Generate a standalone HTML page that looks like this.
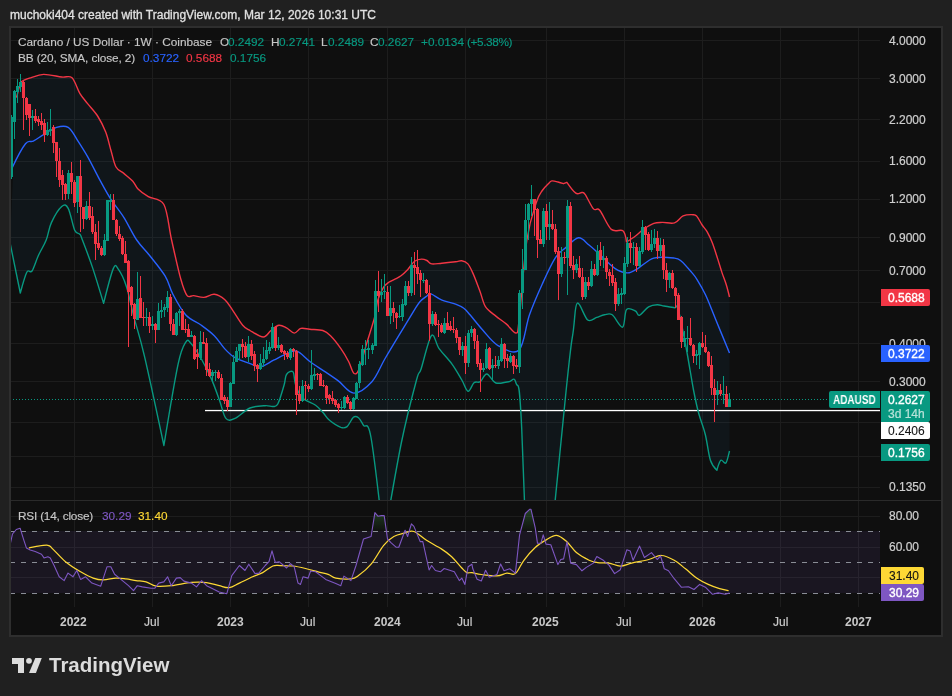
<!DOCTYPE html>
<html><head><meta charset="utf-8">
<style>
.t,.pl span{will-change:transform;}
html,body{margin:0;padding:0;width:952px;height:696px;overflow:hidden;background:#202020;font-family:"Liberation Sans",sans-serif;}
.t{position:absolute;white-space:pre;line-height:12px;font-size:12px;}
.pl{position:absolute;left:881px;width:49px;height:17px;border-radius:0 2px 2px 0;}
.pl span{position:absolute;right:5px;top:3px;font-size:12px;line-height:12px;font-weight:400;-webkit-text-stroke:0.35px currentColor;color:#fff;}
.ax{color:#cfcfcf;-webkit-text-stroke:0.2px #cfcfcf;}
.yr{font-weight:700;color:#c8c8c8;}
.mo{color:#c8c8c8;-webkit-text-stroke:0.2px #c8c8c8;}
.lg{font-size:11.8px;color:#c8c8c8;-webkit-text-stroke:0.15px currentColor;}
.tl{color:#089981;}
</style></head><body>
<div class="t" style="left:10px;top:9px;color:#e0e0e0;-webkit-text-stroke:0.3px #e0e0e0">muchoki404 created with TradingView.com, Mar 12, 2026 10:31 UTC</div>
<div style="position:absolute;left:9px;top:26px;width:930px;height:607px;border:2px solid #2e2e2e;background:#0f0f0f"></div>


<svg style="position:absolute;left:0;top:0" width="952" height="696" viewBox="0 0 952 696">
  <defs>
    <clipPath id="cp"><rect x="11" y="28" width="869" height="472"/></clipPath>
    <clipPath id="cr"><rect x="11" y="501" width="869" height="106"/></clipPath>
    <clipPath id="ob"><rect x="11" y="501" width="869" height="30.5"/></clipPath>
    <linearGradient id="obg" gradientUnits="userSpaceOnUse" x1="0" y1="509" x2="0" y2="531"><stop offset="0" stop-color="#4caf50" stop-opacity="0.32"/><stop offset="1" stop-color="#4caf50" stop-opacity="0.02"/></linearGradient>
  </defs>
  <g stroke="#1d1d1d" stroke-width="1" fill="none">
    <path d="M11 40.5H880M11 78.5H880M11 119.5H880M11 161.5H880M11 199.5H880M11 237.5H880M11 270.5H880M11 302.5H880M11 343.5H880M11 381.5H880M11 422.5H880M11 456.5H880M11 487.5H880"/>
    <path d="M74.5 28V607M152.5 28V607M230.5 28V607M308.5 28V607M387.5 28V607M465.5 28V607M546.5 28V607M624.5 28V607M702.5 28V607M780.5 28V607M858.5 28V607"/>
    <path d="M11 516.5H880M11 547.5H880M11 577.5H880"/>
  </g>
  <path d="M11 500.5H941" stroke="#2a2a2a" stroke-width="1"/>
  <g clip-path="url(#cp)">
    <path d="M16.5 97.6C17.0 95.8 18.4 89.7 19.3 87.0C20.2 84.3 19.7 83.1 21.6 81.6C23.5 80.1 27.0 79.0 30.7 77.8C34.4 76.6 38.4 74.5 43.6 74.4C48.8 74.3 57.0 76.4 61.7 77.0C66.4 77.6 69.0 75.1 72.0 77.8C75.0 80.5 77.2 89.0 79.8 93.3C82.4 97.6 84.6 99.7 87.6 103.6C90.6 107.5 94.9 111.8 97.9 116.5C100.9 121.2 103.5 126.4 105.7 132.0C107.9 137.6 109.2 144.4 110.9 150.2C112.6 156.0 113.8 163.1 116.0 167.0C118.2 170.9 121.0 171.0 123.8 173.4C126.6 175.8 130.4 178.6 132.8 181.2C135.2 183.8 135.4 186.4 138.0 189.0C140.6 191.6 144.0 194.1 148.3 196.7C152.6 199.3 160.0 197.3 163.9 204.5C167.8 211.7 168.8 227.6 171.6 240.0C174.4 252.4 178.1 269.5 180.7 278.8C183.3 288.1 184.9 292.8 187.1 295.6C189.2 298.4 190.8 295.3 193.6 295.6C196.4 295.9 200.4 297.6 203.9 297.4C207.4 297.2 210.9 293.9 214.3 294.3C217.8 294.7 221.6 296.9 224.6 299.5C227.6 302.1 229.4 305.5 232.4 309.8C235.4 314.1 239.8 321.9 242.7 325.3C245.6 328.8 246.6 328.6 250.0 330.5C253.4 332.4 259.8 337.0 263.3 337.0C266.8 337.0 268.4 332.4 271.0 330.5C273.6 328.6 276.2 325.7 278.8 325.3C281.4 324.9 283.9 326.6 286.5 327.9C289.1 329.2 291.9 333.0 294.3 333.1C296.7 333.2 298.2 329.0 300.8 328.4C303.4 327.8 306.1 328.8 309.8 329.2C313.5 329.6 319.4 329.4 322.8 330.5C326.2 331.6 327.5 332.7 330.5 335.7C333.5 338.7 337.9 344.3 340.9 348.6C343.9 352.9 346.5 357.4 348.6 361.5C350.8 365.6 352.1 371.9 353.8 373.2C355.5 374.5 356.9 374.3 359.0 369.3C361.1 364.3 364.1 352.0 366.7 343.4C369.3 334.8 372.6 324.8 374.5 317.6C376.4 310.4 376.4 305.1 377.8 300.1C379.2 295.1 381.4 290.8 383.2 287.8C385.0 284.8 386.6 283.8 388.7 282.3C390.8 280.8 393.4 280.0 395.5 278.9C397.6 277.8 398.9 277.4 401.0 275.8C403.1 274.2 405.5 271.8 407.8 269.4C410.1 267.0 412.3 262.9 414.6 261.2C416.9 259.5 419.4 259.2 421.5 259.1C423.6 259.0 425.2 259.7 426.9 260.5C428.6 261.3 429.2 263.4 431.7 263.9C434.2 264.3 437.9 263.5 441.9 263.2C445.9 262.9 452.3 262.2 455.6 261.8C458.9 261.4 459.6 260.5 461.7 260.8C463.8 261.1 466.0 261.7 467.9 263.9C469.8 266.1 471.2 269.4 473.3 274.1C475.4 278.8 478.1 286.4 480.2 291.9C482.2 297.4 483.0 302.9 485.6 306.9C488.2 310.9 492.5 313.3 495.9 316.1C499.3 318.9 502.8 321.1 506.2 323.9C509.6 326.7 513.9 333.6 516.0 333.0C518.1 332.4 517.3 335.5 519.1 320.0C520.9 304.5 524.0 259.5 526.9 239.8C529.8 220.1 533.9 210.2 536.5 202.0C539.1 193.8 540.2 193.7 542.3 190.5C544.4 187.3 547.5 184.6 549.1 183.0C550.7 181.4 550.4 181.1 551.9 180.9C553.4 180.7 556.1 181.5 558.0 182.0C559.9 182.5 563.5 183.7 563.5 183.7C563.5 183.7 566.9 182.3 566.9 182.3C566.9 182.3 573.3 191.5 575.8 193.2C578.3 194.9 580.3 192.3 581.9 192.5C583.5 192.7 583.4 191.9 585.3 194.6C587.2 197.3 591.1 206.3 593.5 208.9C595.9 211.5 596.7 206.9 599.7 210.3C602.7 213.7 607.4 226.0 611.3 229.4C615.2 232.8 620.4 228.7 622.9 230.8C625.4 232.9 626.5 242.0 626.5 242.0C626.5 242.0 632.7 238.1 635.5 236.0C638.3 233.9 640.4 231.4 643.4 229.3C646.4 227.2 650.6 224.5 653.8 223.3C657.0 222.2 658.9 222.5 662.4 222.4C665.9 222.3 671.0 224.0 674.5 222.9C678.0 221.8 680.0 217.3 683.1 215.9C686.2 214.5 691.1 214.6 693.4 214.7C695.7 214.8 695.4 214.7 696.9 216.4C698.4 218.1 700.4 222.4 702.1 225.0C703.8 227.6 705.5 228.9 707.2 231.9C708.9 234.9 710.7 238.6 712.4 243.1C714.1 247.6 716.0 253.7 717.6 258.6C719.2 263.5 720.5 268.1 721.9 272.4C723.3 276.7 724.9 280.4 726.2 284.5C727.5 288.6 729.0 294.9 729.5 297.0L729.5 451.0C728.9 453.0 727.4 461.3 725.9 462.9C724.4 464.4 722.3 459.1 720.8 460.3C719.3 461.5 716.9 470.2 716.9 470.2C716.9 470.2 712.3 466.2 710.4 460.3C708.5 454.4 707.2 442.2 705.3 434.5C703.4 426.8 700.8 421.1 698.8 413.8C696.8 406.5 695.8 401.7 693.6 390.5C691.5 379.3 688.5 360.1 685.9 346.5C683.3 332.9 680.0 315.4 678.1 309.0C676.2 302.6 676.8 308.3 674.5 307.8C672.2 307.3 667.0 306.5 664.1 306.0C661.2 305.5 659.8 304.6 657.2 304.7C654.6 304.8 651.6 305.1 648.6 306.9C645.6 308.7 641.6 314.6 639.4 315.3C637.2 316.0 637.6 311.9 635.5 311.0C633.4 310.1 628.6 306.9 626.5 309.6C624.4 312.3 625.0 326.3 622.6 327.2C620.2 328.1 615.2 316.9 612.2 314.8C609.2 312.7 607.1 314.4 604.5 314.8C601.9 315.2 599.5 316.5 596.7 317.4C593.9 318.3 590.9 322.4 587.7 320.0C584.5 317.6 579.7 301.5 577.3 303.2C574.9 304.9 575.3 314.8 573.4 330.0C571.5 345.2 572.5 328.2 565.7 394.7C558.9 461.2 532.6 729.0 532.6 729.0C532.6 729.0 524.5 486.0 521.7 428.3C518.9 370.6 518.1 390.8 516.0 383.0C513.9 375.2 512.1 381.7 508.8 381.7C505.4 381.7 499.6 384.3 495.9 383.0C492.2 381.7 489.4 374.2 486.8 374.0C484.2 373.8 482.4 380.2 480.3 381.7C478.2 383.1 476.0 381.1 474.0 382.7C472.0 384.3 470.1 391.8 468.1 391.3C466.1 390.9 464.5 384.5 461.8 380.0C459.1 375.5 455.8 369.3 452.0 364.1C448.2 358.9 442.5 353.3 439.1 348.6C435.7 343.9 434.4 332.2 431.4 335.7C428.4 339.1 423.5 361.9 421.0 369.3C418.5 376.7 419.8 367.7 416.5 380.0C413.2 392.3 406.8 416.2 401.3 443.0C395.9 469.8 383.8 541.0 383.8 541.0C383.8 541.0 374.5 457.3 371.1 438.0C367.7 418.7 365.6 428.8 363.5 425.4C361.4 422.0 360.2 419.1 358.5 417.8C356.8 416.5 355.3 415.8 353.4 417.3C351.5 418.8 349.2 424.9 347.1 426.6C345.0 428.3 343.7 428.4 340.8 427.4C337.9 426.3 332.4 422.7 329.5 420.3C326.6 417.9 325.5 415.3 323.2 412.8C320.9 410.3 319.1 407.7 315.6 405.2C312.1 402.7 305.4 401.1 302.1 397.7C298.8 394.3 297.1 389.1 295.6 384.8C294.1 380.5 294.5 373.6 293.0 371.9C291.5 370.2 288.0 372.3 286.5 374.5C285.0 376.7 285.6 380.1 284.1 385.0C282.7 389.9 279.7 400.4 277.8 404.0C275.9 407.6 274.9 406.2 272.8 406.5C270.7 406.8 269.0 405.4 265.2 405.7C261.4 405.9 255.0 405.9 250.0 408.0C245.0 410.1 239.0 416.7 235.0 418.4C231.0 420.1 228.5 421.4 225.9 418.4C223.3 415.4 221.9 406.8 219.5 400.3C217.1 393.8 214.7 386.5 211.7 379.6C208.7 372.7 204.8 365.0 201.4 359.0C198.0 353.0 193.6 346.2 191.0 343.4C188.4 340.6 188.0 338.7 185.8 342.1C183.7 345.6 181.8 346.9 178.1 364.1C174.4 381.3 163.9 445.5 163.9 445.5C163.9 445.5 149.5 377.7 144.5 356.4C139.5 335.1 137.1 329.2 134.1 317.6C131.1 306.0 129.0 294.5 126.4 286.5C123.8 278.5 120.8 272.7 118.6 269.7C116.4 266.7 115.9 262.8 113.4 268.4C110.9 274.0 103.6 303.4 103.6 303.4C103.6 303.4 96.3 279.0 92.8 268.4C89.3 257.8 84.6 245.7 82.4 240.0C80.2 234.3 81.1 235.8 79.8 234.2C78.5 232.6 76.6 234.6 74.7 230.3C72.8 226.0 70.4 212.3 68.2 208.3C66.0 204.3 64.5 204.1 61.7 206.5C58.9 208.9 54.0 217.0 51.4 222.6C48.8 228.2 48.4 234.5 46.2 240.0C44.0 245.5 40.8 250.3 38.4 255.5C36.0 260.7 33.9 268.2 32.0 271.0C30.1 273.8 28.8 268.6 26.8 272.3C24.9 276.0 20.3 293.0 20.3 293.0C20.3 293.0 11.7 251.0 10.0 242.6Z" fill="#2196f3" fill-opacity="0.05"/>
    <path d="M10 399.5H829" stroke="#089981" stroke-width="1" stroke-dasharray="1 2"/>
    <rect x="205" y="409.9" width="675" height="1.3" fill="#ffffff"/>
    <path d="M16.5 97.6C17.0 95.8 18.4 89.7 19.3 87.0C20.2 84.3 19.7 83.1 21.6 81.6C23.5 80.1 27.0 79.0 30.7 77.8C34.4 76.6 38.4 74.5 43.6 74.4C48.8 74.3 57.0 76.4 61.7 77.0C66.4 77.6 69.0 75.1 72.0 77.8C75.0 80.5 77.2 89.0 79.8 93.3C82.4 97.6 84.6 99.7 87.6 103.6C90.6 107.5 94.9 111.8 97.9 116.5C100.9 121.2 103.5 126.4 105.7 132.0C107.9 137.6 109.2 144.4 110.9 150.2C112.6 156.0 113.8 163.1 116.0 167.0C118.2 170.9 121.0 171.0 123.8 173.4C126.6 175.8 130.4 178.6 132.8 181.2C135.2 183.8 135.4 186.4 138.0 189.0C140.6 191.6 144.0 194.1 148.3 196.7C152.6 199.3 160.0 197.3 163.9 204.5C167.8 211.7 168.8 227.6 171.6 240.0C174.4 252.4 178.1 269.5 180.7 278.8C183.3 288.1 184.9 292.8 187.1 295.6C189.2 298.4 190.8 295.3 193.6 295.6C196.4 295.9 200.4 297.6 203.9 297.4C207.4 297.2 210.9 293.9 214.3 294.3C217.8 294.7 221.6 296.9 224.6 299.5C227.6 302.1 229.4 305.5 232.4 309.8C235.4 314.1 239.8 321.9 242.7 325.3C245.6 328.8 246.6 328.6 250.0 330.5C253.4 332.4 259.8 337.0 263.3 337.0C266.8 337.0 268.4 332.4 271.0 330.5C273.6 328.6 276.2 325.7 278.8 325.3C281.4 324.9 283.9 326.6 286.5 327.9C289.1 329.2 291.9 333.0 294.3 333.1C296.7 333.2 298.2 329.0 300.8 328.4C303.4 327.8 306.1 328.8 309.8 329.2C313.5 329.6 319.4 329.4 322.8 330.5C326.2 331.6 327.5 332.7 330.5 335.7C333.5 338.7 337.9 344.3 340.9 348.6C343.9 352.9 346.5 357.4 348.6 361.5C350.8 365.6 352.1 371.9 353.8 373.2C355.5 374.5 356.9 374.3 359.0 369.3C361.1 364.3 364.1 352.0 366.7 343.4C369.3 334.8 372.6 324.8 374.5 317.6C376.4 310.4 376.4 305.1 377.8 300.1C379.2 295.1 381.4 290.8 383.2 287.8C385.0 284.8 386.6 283.8 388.7 282.3C390.8 280.8 393.4 280.0 395.5 278.9C397.6 277.8 398.9 277.4 401.0 275.8C403.1 274.2 405.5 271.8 407.8 269.4C410.1 267.0 412.3 262.9 414.6 261.2C416.9 259.5 419.4 259.2 421.5 259.1C423.6 259.0 425.2 259.7 426.9 260.5C428.6 261.3 429.2 263.4 431.7 263.9C434.2 264.3 437.9 263.5 441.9 263.2C445.9 262.9 452.3 262.2 455.6 261.8C458.9 261.4 459.6 260.5 461.7 260.8C463.8 261.1 466.0 261.7 467.9 263.9C469.8 266.1 471.2 269.4 473.3 274.1C475.4 278.8 478.1 286.4 480.2 291.9C482.2 297.4 483.0 302.9 485.6 306.9C488.2 310.9 492.5 313.3 495.9 316.1C499.3 318.9 502.8 321.1 506.2 323.9C509.6 326.7 513.9 333.6 516.0 333.0C518.1 332.4 517.3 335.5 519.1 320.0C520.9 304.5 524.0 259.5 526.9 239.8C529.8 220.1 533.9 210.2 536.5 202.0C539.1 193.8 540.2 193.7 542.3 190.5C544.4 187.3 547.5 184.6 549.1 183.0C550.7 181.4 550.4 181.1 551.9 180.9C553.4 180.7 556.1 181.5 558.0 182.0C559.9 182.5 563.5 183.7 563.5 183.7C563.5 183.7 566.9 182.3 566.9 182.3C566.9 182.3 573.3 191.5 575.8 193.2C578.3 194.9 580.3 192.3 581.9 192.5C583.5 192.7 583.4 191.9 585.3 194.6C587.2 197.3 591.1 206.3 593.5 208.9C595.9 211.5 596.7 206.9 599.7 210.3C602.7 213.7 607.4 226.0 611.3 229.4C615.2 232.8 620.4 228.7 622.9 230.8C625.4 232.9 626.5 242.0 626.5 242.0C626.5 242.0 632.7 238.1 635.5 236.0C638.3 233.9 640.4 231.4 643.4 229.3C646.4 227.2 650.6 224.5 653.8 223.3C657.0 222.2 658.9 222.5 662.4 222.4C665.9 222.3 671.0 224.0 674.5 222.9C678.0 221.8 680.0 217.3 683.1 215.9C686.2 214.5 691.1 214.6 693.4 214.7C695.7 214.8 695.4 214.7 696.9 216.4C698.4 218.1 700.4 222.4 702.1 225.0C703.8 227.6 705.5 228.9 707.2 231.9C708.9 234.9 710.7 238.6 712.4 243.1C714.1 247.6 716.0 253.7 717.6 258.6C719.2 263.5 720.5 268.1 721.9 272.4C723.3 276.7 724.9 280.4 726.2 284.5C727.5 288.6 729.0 294.9 729.5 297.0" fill="none" stroke="#f23645" stroke-width="1.4" stroke-linejoin="round"/>
    <path d="M11.0 175.0C11.3 173.7 10.2 172.2 12.6 167.0C15.0 161.8 22.1 148.0 25.5 143.7C28.9 139.4 30.3 142.6 33.3 141.1C36.3 139.6 39.7 136.9 43.6 134.6C47.5 132.3 52.4 128.6 56.5 127.4C60.6 126.2 64.8 125.3 68.2 127.4C71.7 129.5 74.0 134.9 77.2 139.8C80.4 144.7 83.7 149.7 87.6 156.6C91.5 163.5 96.6 174.1 100.5 181.2C104.4 188.3 107.0 193.3 110.9 199.3C114.8 205.3 119.5 210.6 123.8 217.4C128.1 224.2 132.4 233.7 136.7 240.0C141.0 246.3 144.8 249.5 149.6 255.5C154.3 261.5 161.3 269.7 165.2 276.2C169.1 282.7 169.5 287.8 172.9 294.3C176.3 300.8 181.1 309.8 185.8 315.0C190.6 320.2 196.7 321.9 201.4 325.3C206.2 328.8 210.4 331.8 214.3 335.7C218.2 339.6 221.2 344.9 224.6 348.6C228.0 352.3 230.8 355.2 235.0 357.7C239.2 360.2 245.7 362.1 250.0 363.6C254.3 365.1 256.8 367.3 260.7 366.7C264.6 366.1 269.3 362.3 273.6 360.2C277.9 358.1 282.6 355.3 286.5 353.8C290.4 352.3 293.0 349.9 296.9 351.2C300.8 352.5 305.1 358.1 309.8 361.5C314.5 364.9 320.6 368.7 325.3 371.9C330.1 375.1 333.6 377.4 338.3 380.9C343.1 384.4 348.2 393.0 353.8 393.1C359.4 393.2 366.7 387.4 371.9 381.7C377.1 376.0 380.1 367.1 384.8 359.0C389.5 350.9 395.3 341.3 400.3 333.1C405.3 324.9 411.3 314.9 414.6 309.6C417.9 304.3 418.1 303.8 420.1 301.5C422.2 299.2 425.1 297.3 426.9 296.0C428.7 294.7 428.5 293.2 431.0 293.9C433.5 294.6 437.8 298.4 441.9 300.1C446.0 301.8 452.0 302.8 455.6 304.2C459.2 305.6 461.4 306.5 463.8 308.3C466.2 310.1 466.8 311.1 470.0 314.8C473.2 318.5 478.2 325.1 482.9 330.3C487.6 335.5 492.4 342.5 498.4 345.8C504.4 349.1 513.9 355.2 519.1 350.0C524.3 344.8 525.6 325.8 529.5 314.8C533.4 303.8 538.1 293.3 542.4 283.8C546.7 274.3 551.4 263.9 555.3 257.9C559.2 251.9 561.8 250.9 565.7 247.6C569.6 244.2 574.7 238.2 578.6 237.8C582.5 237.4 585.5 242.3 589.0 245.0C592.5 247.7 595.0 250.1 599.3 254.0C603.6 257.9 610.1 265.2 614.8 268.3C619.5 271.4 623.8 272.9 627.7 272.9C631.6 272.9 633.8 270.8 638.1 268.3C642.5 265.8 647.7 259.8 653.8 258.1C659.9 256.4 669.9 257.6 674.5 258.1C679.1 258.6 678.5 258.8 681.4 261.2C684.3 263.6 689.1 269.4 691.7 272.4C694.3 275.4 694.6 275.6 696.9 279.3C699.2 283.0 702.3 288.0 705.5 294.8C708.7 301.6 711.9 310.3 715.9 320.0C719.9 329.7 727.2 347.5 729.5 353.0" fill="none" stroke="#2962ff" stroke-width="1.4" stroke-linejoin="round"/>
    <path d="M10.0 242.6C11.7 251.0 20.3 293.0 20.3 293.0C20.3 293.0 24.9 276.0 26.8 272.3C28.8 268.6 30.1 273.8 32.0 271.0C33.9 268.2 36.0 260.7 38.4 255.5C40.8 250.3 44.0 245.5 46.2 240.0C48.4 234.5 48.8 228.2 51.4 222.6C54.0 217.0 58.9 208.9 61.7 206.5C64.5 204.1 66.0 204.3 68.2 208.3C70.4 212.3 72.8 226.0 74.7 230.3C76.6 234.6 78.5 232.6 79.8 234.2C81.1 235.8 80.2 234.3 82.4 240.0C84.6 245.7 89.3 257.8 92.8 268.4C96.3 279.0 103.6 303.4 103.6 303.4C103.6 303.4 110.9 274.0 113.4 268.4C115.9 262.8 116.4 266.7 118.6 269.7C120.8 272.7 123.8 278.5 126.4 286.5C129.0 294.5 131.1 306.0 134.1 317.6C137.1 329.2 139.5 335.1 144.5 356.4C149.5 377.7 163.9 445.5 163.9 445.5C163.9 445.5 174.4 381.3 178.1 364.1C181.8 346.9 183.7 345.6 185.8 342.1C188.0 338.7 188.4 340.6 191.0 343.4C193.6 346.2 198.0 353.0 201.4 359.0C204.8 365.0 208.7 372.7 211.7 379.6C214.7 386.5 217.1 393.8 219.5 400.3C221.9 406.8 223.3 415.4 225.9 418.4C228.5 421.4 231.0 420.1 235.0 418.4C239.0 416.7 245.0 410.1 250.0 408.0C255.0 405.9 261.4 405.9 265.2 405.7C269.0 405.4 270.7 406.8 272.8 406.5C274.9 406.2 275.9 407.6 277.8 404.0C279.7 400.4 282.7 389.9 284.1 385.0C285.6 380.1 285.0 376.7 286.5 374.5C288.0 372.3 291.5 370.2 293.0 371.9C294.5 373.6 294.1 380.5 295.6 384.8C297.1 389.1 298.8 394.3 302.1 397.7C305.4 401.1 312.1 402.7 315.6 405.2C319.1 407.7 320.9 410.3 323.2 412.8C325.5 415.3 326.6 417.9 329.5 420.3C332.4 422.7 337.9 426.3 340.8 427.4C343.7 428.4 345.0 428.3 347.1 426.6C349.2 424.9 351.5 418.8 353.4 417.3C355.3 415.8 356.8 416.5 358.5 417.8C360.2 419.1 361.4 422.0 363.5 425.4C365.6 428.8 367.7 418.7 371.1 438.0C374.5 457.3 383.8 541.0 383.8 541.0C383.8 541.0 395.9 469.8 401.3 443.0C406.8 416.2 413.2 392.3 416.5 380.0C419.8 367.7 418.5 376.7 421.0 369.3C423.5 361.9 428.4 339.1 431.4 335.7C434.4 332.2 435.7 343.9 439.1 348.6C442.5 353.3 448.2 358.9 452.0 364.1C455.8 369.3 459.1 375.5 461.8 380.0C464.5 384.5 466.1 390.9 468.1 391.3C470.1 391.8 472.0 384.3 474.0 382.7C476.0 381.1 478.2 383.1 480.3 381.7C482.4 380.2 484.2 373.8 486.8 374.0C489.4 374.2 492.2 381.7 495.9 383.0C499.6 384.3 505.4 381.7 508.8 381.7C512.1 381.7 513.9 375.2 516.0 383.0C518.1 390.8 518.9 370.6 521.7 428.3C524.5 486.0 532.6 729.0 532.6 729.0C532.6 729.0 558.9 461.2 565.7 394.7C572.5 328.2 571.5 345.2 573.4 330.0C575.3 314.8 574.9 304.9 577.3 303.2C579.7 301.5 584.5 317.6 587.7 320.0C590.9 322.4 593.9 318.3 596.7 317.4C599.5 316.5 601.9 315.2 604.5 314.8C607.1 314.4 609.2 312.7 612.2 314.8C615.2 316.9 620.2 328.1 622.6 327.2C625.0 326.3 624.4 312.3 626.5 309.6C628.6 306.9 633.4 310.1 635.5 311.0C637.6 311.9 637.2 316.0 639.4 315.3C641.6 314.6 645.6 308.7 648.6 306.9C651.6 305.1 654.6 304.8 657.2 304.7C659.8 304.6 661.2 305.5 664.1 306.0C667.0 306.5 672.2 307.3 674.5 307.8C676.8 308.3 676.2 302.6 678.1 309.0C680.0 315.4 683.3 332.9 685.9 346.5C688.5 360.1 691.5 379.3 693.6 390.5C695.8 401.7 696.8 406.5 698.8 413.8C700.8 421.1 703.4 426.8 705.3 434.5C707.2 442.2 708.5 454.4 710.4 460.3C712.3 466.2 716.9 470.2 716.9 470.2C716.9 470.2 719.3 461.5 720.8 460.3C722.3 459.1 724.4 464.4 725.9 462.9C727.4 461.3 728.9 453.0 729.5 451.0" fill="none" stroke="#089981" stroke-width="1.4" stroke-linejoin="round"/>
    <path d="M10 117h3v60h-3zM11 115h1v2h-1zM11 177h1v2h-1zM13 91h3v31h-3zM14 90h1v1h-1zM14 122h1v17h-1zM16 86h3v6h-3zM17 79h1v7h-1zM17 92h1v11h-1zM19 82h3v5h-3zM20 74h1v8h-1zM20 87h1v5h-1zM31 116h3v2h-3zM32 110h1v6h-1zM32 118h1v12h-1zM46 130h3v5h-3zM47 122h1v8h-1zM47 135h1v1h-1zM49 129h3v2h-3zM50 109h1v20h-1zM50 131h1v5h-1zM67 173h3v21h-3zM68 170h1v3h-1zM68 194h1v5h-1zM76 176h3v26h-3zM77 202h1v11h-1zM85 206h3v13h-3zM86 201h1v5h-1zM86 219h1v1h-1zM103 240h3v15h-3zM104 234h1v6h-1zM104 255h1v1h-1zM106 200h3v41h-3zM109 200h3v2h-3zM110 194h1v6h-1zM110 202h1v8h-1zM136 299h3v21h-3zM137 272h1v27h-1zM145 317h3v1h-3zM146 308h1v9h-1zM146 318h1v8h-1zM151 324h3v2h-3zM152 316h1v8h-1zM152 326h1v4h-1zM157 311h3v19h-3zM158 303h1v8h-1zM160 310h3v2h-3zM161 300h1v10h-1zM161 312h1v6h-1zM163 307h3v3h-3zM164 304h1v3h-1zM164 310h1v7h-1zM166 297h3v11h-3zM167 291h1v6h-1zM167 308h1v4h-1zM175 313h3v22h-3zM176 312h1v1h-1zM176 335h1v1h-1zM178 311h3v2h-3zM179 309h1v2h-1zM179 313h1v13h-1zM190 335h3v2h-3zM191 331h1v4h-1zM199 342h3v16h-3zM200 331h1v11h-1zM200 358h1v2h-1zM211 372h3v4h-3zM212 370h1v2h-1zM212 376h1v6h-1zM214 372h3v1h-3zM215 370h1v2h-1zM215 373h1v8h-1zM229 383h3v24h-3zM230 382h1v1h-1zM232 362h3v22h-3zM233 355h1v7h-1zM235 351h3v11h-3zM236 347h1v4h-1zM238 344h3v7h-3zM239 351h1v9h-1zM247 344h3v13h-3zM248 336h1v8h-1zM248 357h1v5h-1zM259 363h3v6h-3zM260 354h1v9h-1zM260 369h1v1h-1zM262 359h3v4h-3zM263 347h1v12h-1zM263 363h1v4h-1zM265 350h3v9h-3zM266 340h1v10h-1zM266 359h1v1h-1zM268 347h3v4h-3zM269 342h1v5h-1zM269 351h1v3h-1zM271 327h3v21h-3zM272 323h1v4h-1zM272 348h1v1h-1zM277 345h3v3h-3zM278 337h1v8h-1zM278 348h1v2h-1zM289 349h3v9h-3zM290 348h1v1h-1zM290 358h1v2h-1zM301 386h3v15h-3zM302 380h1v6h-1zM302 401h1v1h-1zM310 375h3v14h-3zM311 350h1v25h-1zM311 389h1v1h-1zM313 374h3v2h-3zM314 368h1v6h-1zM314 376h1v4h-1zM340 407h3v1h-3zM341 401h1v6h-1zM341 408h1v2h-1zM343 397h3v11h-3zM344 396h1v1h-1zM344 408h1v1h-1zM352 398h3v11h-3zM353 397h1v1h-1zM353 409h1v1h-1zM355 383h3v16h-3zM356 382h1v1h-1zM358 364h3v19h-3zM359 361h1v3h-1zM359 383h1v5h-1zM361 349h3v16h-3zM362 345h1v4h-1zM362 365h1v1h-1zM364 349h3v1h-3zM365 340h1v9h-1zM365 350h1v15h-1zM367 348h3v2h-3zM368 340h1v8h-1zM368 350h1v9h-1zM371 345h3v5h-3zM372 343h1v2h-1zM372 350h1v4h-1zM374 291h3v55h-3zM375 280h1v11h-1zM380 292h3v3h-3zM381 279h1v13h-1zM381 295h1v7h-1zM383 291h3v1h-3zM384 274h1v17h-1zM384 292h1v7h-1zM389 308h3v8h-3zM390 286h1v22h-1zM390 316h1v8h-1zM398 316h3v1h-3zM399 305h1v11h-1zM399 317h1v1h-1zM401 304h3v13h-3zM402 299h1v5h-1zM402 317h1v4h-1zM404 286h3v19h-3zM405 281h1v5h-1zM405 305h1v1h-1zM410 265h3v28h-3zM411 257h1v8h-1zM411 293h1v3h-1zM422 280h3v1h-3zM423 273h1v7h-1zM423 281h1v2h-1zM431 314h3v10h-3zM432 311h1v3h-1zM432 324h1v2h-1zM443 323h3v10h-3zM444 318h1v5h-1zM444 333h1v1h-1zM461 346h3v4h-3zM462 342h1v4h-1zM462 350h1v6h-1zM467 333h3v30h-3zM468 330h1v3h-1zM468 363h1v4h-1zM470 329h3v4h-3zM471 326h1v3h-1zM471 333h1v4h-1zM482 368h3v2h-3zM483 363h1v5h-1zM483 370h1v2h-1zM485 349h3v19h-3zM486 343h1v6h-1zM486 368h1v1h-1zM491 365h3v3h-3zM492 359h1v6h-1zM492 368h1v12h-1zM497 360h3v6h-3zM498 356h1v4h-1zM498 366h1v3h-1zM500 344h3v17h-3zM501 338h1v6h-1zM501 361h1v1h-1zM509 356h3v6h-3zM510 353h1v3h-1zM510 362h1v1h-1zM518 293h3v74h-3zM519 290h1v3h-1zM519 367h1v6h-1zM521 269h3v24h-3zM522 249h1v20h-1zM522 293h1v16h-1zM524 220h3v50h-3zM525 204h1v16h-1zM527 204h3v16h-3zM528 203h1v1h-1zM528 220h1v20h-1zM530 199h3v5h-3zM531 185h1v14h-1zM531 204h1v12h-1zM542 211h3v33h-3zM543 208h1v3h-1zM543 244h1v3h-1zM548 224h3v3h-3zM549 202h1v22h-1zM549 227h1v13h-1zM560 257h3v17h-3zM561 247h1v10h-1zM561 274h1v3h-1zM566 206h3v52h-3zM567 200h1v6h-1zM567 258h1v37h-1zM575 264h3v6h-3zM576 259h1v5h-1zM576 270h1v3h-1zM584 282h3v15h-3zM585 277h1v5h-1zM585 297h1v2h-1zM590 269h3v17h-3zM591 261h1v8h-1zM591 286h1v1h-1zM596 251h3v24h-3zM597 245h1v6h-1zM597 275h1v1h-1zM602 258h3v2h-3zM603 246h1v12h-1zM603 260h1v8h-1zM617 294h3v10h-3zM618 288h1v6h-1zM618 304h1v2h-1zM620 293h3v2h-3zM621 288h1v5h-1zM621 295h1v9h-1zM623 263h3v31h-3zM624 257h1v6h-1zM624 294h1v1h-1zM626 243h3v21h-3zM627 237h1v6h-1zM627 264h1v3h-1zM632 247h3v1h-3zM633 242h1v5h-1zM633 248h1v17h-1zM638 251h3v15h-3zM639 247h1v4h-1zM639 266h1v1h-1zM641 227h3v25h-3zM642 220h1v7h-1zM642 252h1v2h-1zM650 244h3v6h-3zM651 230h1v14h-1zM651 250h1v2h-1zM653 238h3v6h-3zM654 229h1v9h-1zM654 244h1v4h-1zM659 245h3v6h-3zM660 238h1v7h-1zM660 251h1v5h-1zM668 273h3v7h-3zM669 272h1v1h-1zM669 280h1v8h-1zM683 338h3v4h-3zM684 331h1v7h-1zM684 342h1v5h-1zM686 338h3v1h-3zM687 326h1v12h-1zM687 339h1v13h-1zM695 354h3v2h-3zM696 350h1v4h-1zM696 356h1v9h-1zM698 343h3v12h-3zM699 342h1v1h-1zM699 355h1v14h-1zM716 390h3v5h-3zM717 381h1v9h-1zM717 395h1v10h-1zM722 394h3v1h-3zM723 376h1v18h-1zM723 395h1v9h-1zM728 399h3v8h-3zM729 393h1v6h-1z" fill="#089981"/>
    <path d="M22 82h3v16h-3zM23 80h1v2h-1zM23 98h1v32h-1zM25 98h3v17h-3zM26 97h1v1h-1zM26 115h1v5h-1zM28 104h3v14h-3zM29 118h1v18h-1zM34 116h3v5h-3zM35 109h1v7h-1zM35 121h1v2h-1zM37 119h3v3h-3zM38 116h1v3h-1zM38 122h1v4h-1zM40 121h3v4h-3zM41 113h1v8h-1zM41 125h1v5h-1zM43 123h3v12h-3zM44 119h1v4h-1zM44 135h1v7h-1zM52 127h3v16h-3zM53 125h1v2h-1zM53 143h1v10h-1zM55 142h3v19h-3zM56 161h1v16h-1zM58 161h3v19h-3zM59 148h1v13h-1zM59 180h1v7h-1zM61 175h3v10h-3zM62 170h1v5h-1zM62 185h1v15h-1zM64 184h3v10h-3zM65 183h1v1h-1zM65 194h1v6h-1zM70 173h3v9h-3zM71 162h1v11h-1zM71 182h1v12h-1zM73 182h3v21h-3zM74 180h1v2h-1zM74 203h1v4h-1zM79 176h3v31h-3zM80 160h1v16h-1zM80 207h1v25h-1zM82 207h3v12h-3zM83 219h1v10h-1zM88 206h3v12h-3zM89 192h1v14h-1zM89 218h1v2h-1zM91 216h3v16h-3zM92 207h1v9h-1zM92 232h1v2h-1zM94 232h3v12h-3zM95 224h1v8h-1zM95 244h1v16h-1zM97 243h3v5h-3zM98 221h1v22h-1zM98 248h1v2h-1zM100 248h3v7h-3zM101 246h1v2h-1zM101 255h1v1h-1zM112 200h3v20h-3zM113 194h1v6h-1zM115 220h3v14h-3zM116 219h1v1h-1zM116 234h1v2h-1zM118 234h3v5h-3zM119 226h1v8h-1zM119 239h1v2h-1zM121 238h3v16h-3zM122 236h1v2h-1zM122 254h1v1h-1zM124 254h3v9h-3zM125 241h1v13h-1zM127 261h3v31h-3zM128 260h1v1h-1zM128 292h1v55h-1zM130 287h3v18h-3zM131 286h1v1h-1zM131 305h1v11h-1zM133 304h3v15h-3zM134 303h1v1h-1zM134 319h1v10h-1zM139 298h3v20h-3zM140 276h1v22h-1zM142 317h3v1h-3zM143 302h1v15h-1zM143 318h1v8h-1zM148 317h3v9h-3zM149 312h1v5h-1zM149 326h1v7h-1zM154 324h3v6h-3zM155 323h1v1h-1zM155 330h1v13h-1zM169 297h3v27h-3zM170 294h1v3h-1zM170 324h1v7h-1zM172 324h3v11h-3zM173 319h1v5h-1zM181 311h3v19h-3zM182 309h1v2h-1zM184 329h3v1h-3zM185 319h1v10h-1zM185 330h1v3h-1zM187 329h3v8h-3zM188 324h1v5h-1zM193 336h3v23h-3zM194 335h1v1h-1zM194 359h1v1h-1zM196 354h3v3h-3zM197 349h1v5h-1zM197 357h1v12h-1zM202 342h3v2h-3zM203 332h1v10h-1zM205 343h3v27h-3zM206 338h1v5h-1zM206 370h1v6h-1zM208 369h3v7h-3zM209 363h1v6h-1zM209 376h1v1h-1zM217 372h3v6h-3zM218 370h1v2h-1zM218 378h1v1h-1zM220 378h3v22h-3zM221 374h1v4h-1zM223 397h3v4h-3zM224 395h1v2h-1zM224 401h1v3h-1zM226 400h3v7h-3zM227 397h1v3h-1zM227 407h1v4h-1zM241 344h3v3h-3zM242 339h1v5h-1zM242 347h1v11h-1zM244 346h3v11h-3zM245 342h1v4h-1zM245 357h1v1h-1zM250 344h3v12h-3zM251 340h1v4h-1zM251 356h1v4h-1zM253 354h3v12h-3zM254 351h1v3h-1zM254 366h1v5h-1zM256 365h3v4h-3zM257 364h1v1h-1zM257 369h1v13h-1zM274 327h3v21h-3zM275 326h1v1h-1zM275 348h1v3h-1zM280 345h3v7h-3zM281 344h1v1h-1zM281 352h1v1h-1zM283 351h3v3h-3zM284 350h1v1h-1zM284 354h1v6h-1zM286 353h3v4h-3zM287 351h1v2h-1zM287 357h1v2h-1zM292 349h3v2h-3zM293 348h1v1h-1zM293 351h1v6h-1zM295 351h3v44h-3zM296 350h1v1h-1zM296 395h1v20h-1zM298 394h3v7h-3zM299 386h1v8h-1zM299 401h1v3h-1zM304 385h3v1h-3zM305 381h1v4h-1zM305 386h1v14h-1zM307 386h3v3h-3zM308 384h1v2h-1zM308 389h1v3h-1zM316 374h3v1h-3zM317 373h1v1h-1zM317 375h1v5h-1zM319 374h3v12h-3zM320 373h1v1h-1zM322 385h3v1h-3zM323 380h1v5h-1zM323 386h1v1h-1zM325 386h3v12h-3zM326 385h1v1h-1zM326 398h1v6h-1zM328 395h3v4h-3zM329 394h1v1h-1zM329 399h1v5h-1zM331 398h3v3h-3zM332 391h1v7h-1zM332 401h1v3h-1zM334 400h3v5h-3zM335 399h1v1h-1zM335 405h1v2h-1zM337 404h3v4h-3zM338 403h1v1h-1zM338 408h1v5h-1zM346 397h3v6h-3zM347 395h1v2h-1zM347 403h1v1h-1zM349 402h3v7h-3zM350 401h1v1h-1zM350 409h1v1h-1zM377 291h3v5h-3zM378 271h1v20h-1zM378 296h1v16h-1zM386 292h3v24h-3zM387 286h1v6h-1zM392 308h3v5h-3zM393 302h1v6h-1zM393 313h1v9h-1zM395 313h3v5h-3zM396 312h1v1h-1zM396 318h1v11h-1zM407 286h3v7h-3zM408 281h1v5h-1zM408 293h1v3h-1zM413 265h3v3h-3zM414 252h1v13h-1zM414 268h1v27h-1zM416 267h3v7h-3zM417 250h1v17h-1zM417 274h1v10h-1zM419 273h3v7h-3zM420 270h1v3h-1zM420 280h1v17h-1zM425 280h3v13h-3zM426 279h1v1h-1zM426 293h1v1h-1zM428 293h3v31h-3zM429 285h1v8h-1zM429 324h1v17h-1zM434 314h3v11h-3zM435 312h1v2h-1zM435 325h1v1h-1zM437 324h3v1h-3zM438 320h1v4h-1zM438 325h1v12h-1zM440 325h3v7h-3zM441 323h1v2h-1zM441 332h1v1h-1zM446 323h3v7h-3zM447 312h1v11h-1zM449 326h3v4h-3zM450 321h1v5h-1zM450 330h1v1h-1zM452 329h3v1h-3zM453 317h1v12h-1zM453 330h1v3h-1zM455 330h3v8h-3zM456 328h1v2h-1zM456 338h1v5h-1zM458 337h3v13h-3zM459 350h1v5h-1zM464 346h3v17h-3zM465 336h1v10h-1zM465 363h1v11h-1zM473 329h3v12h-3zM474 328h1v1h-1zM474 341h1v8h-1zM476 341h3v23h-3zM477 335h1v6h-1zM477 364h1v3h-1zM479 363h3v7h-3zM480 359h1v4h-1zM480 370h1v22h-1zM488 348h3v21h-3zM489 347h1v1h-1zM489 369h1v1h-1zM494 365h3v1h-3zM495 356h1v9h-1zM495 366h1v2h-1zM503 344h3v15h-3zM504 343h1v1h-1zM504 359h1v9h-1zM506 358h3v3h-3zM507 354h1v4h-1zM507 361h1v7h-1zM512 356h3v10h-3zM513 355h1v1h-1zM513 366h1v8h-1zM515 365h3v2h-3zM516 359h1v6h-1zM516 367h1v2h-1zM533 199h3v11h-3zM534 210h1v26h-1zM536 209h3v31h-3zM537 208h1v1h-1zM537 240h1v18h-1zM539 239h3v5h-3zM540 230h1v9h-1zM545 211h3v16h-3zM546 204h1v7h-1zM546 227h1v13h-1zM551 224h3v5h-3zM552 210h1v14h-1zM552 229h1v1h-1zM554 229h3v23h-3zM555 224h1v5h-1zM555 252h1v2h-1zM557 251h3v23h-3zM558 247h1v4h-1zM558 274h1v26h-1zM563 257h3v1h-3zM564 252h1v5h-1zM564 258h1v6h-1zM569 206h3v60h-3zM570 202h1v4h-1zM570 266h1v2h-1zM572 265h3v5h-3zM573 256h1v9h-1zM573 270h1v9h-1zM578 268h3v9h-3zM579 256h1v12h-1zM579 277h1v1h-1zM581 277h3v20h-3zM582 268h1v9h-1zM582 297h1v3h-1zM587 282h3v4h-3zM588 277h1v5h-1zM588 286h1v4h-1zM593 269h3v6h-3zM594 264h1v5h-1zM594 275h1v1h-1zM599 250h3v10h-3zM600 242h1v8h-1zM600 260h1v6h-1zM605 258h3v14h-3zM606 256h1v2h-1zM606 272h1v7h-1zM608 272h3v4h-3zM609 269h1v3h-1zM609 276h1v10h-1zM611 275h3v8h-3zM612 264h1v11h-1zM612 283h1v3h-1zM614 282h3v22h-3zM615 278h1v4h-1zM615 304h1v7h-1zM629 243h3v5h-3zM630 232h1v11h-1zM630 248h1v15h-1zM635 247h3v19h-3zM636 243h1v4h-1zM636 266h1v6h-1zM644 227h3v8h-3zM645 226h1v1h-1zM645 235h1v15h-1zM647 234h3v16h-3zM648 232h1v2h-1zM648 250h1v1h-1zM656 238h3v13h-3zM657 231h1v7h-1zM657 251h1v8h-1zM662 245h3v25h-3zM663 239h1v6h-1zM663 270h1v9h-1zM665 270h3v10h-3zM666 263h1v7h-1zM666 280h1v12h-1zM671 273h3v15h-3zM672 270h1v3h-1zM672 288h1v1h-1zM674 288h3v8h-3zM675 287h1v1h-1zM675 296h1v12h-1zM677 295h3v25h-3zM678 293h1v2h-1zM680 317h3v25h-3zM681 316h1v1h-1zM681 342h1v6h-1zM689 338h3v7h-3zM690 318h1v20h-1zM690 345h1v1h-1zM692 345h3v11h-3zM693 344h1v1h-1zM693 356h1v7h-1zM701 343h3v4h-3zM702 332h1v11h-1zM702 347h1v1h-1zM704 347h3v5h-3zM705 335h1v12h-1zM705 352h1v1h-1zM707 352h3v14h-3zM708 351h1v1h-1zM708 366h1v1h-1zM710 365h3v23h-3zM711 356h1v9h-1zM711 388h1v7h-1zM713 388h3v7h-3zM714 379h1v9h-1zM714 395h1v27h-1zM719 390h3v4h-3zM720 384h1v6h-1zM720 394h1v2h-1zM725 394h3v13h-3zM726 386h1v8h-1z" fill="#f23645"/>
  </g>
  <g clip-path="url(#cr)">
    <rect x="11" y="531" width="869" height="62" fill="#7e57c2" fill-opacity="0.1"/>
    <g stroke="#8a8d96" stroke-width="1" stroke-dasharray="5 6" fill="none">
      <path d="M10 531.5H880M10 562.5H880M10 593.5H880"/>
    </g>
    <polygon clip-path="url(#ob)" points="10.0,545.3 12.5,534.0 16.3,529.5 20.1,528.2 23.9,540.3 26.4,547.9 30.2,549.9 35.2,551.6 41.5,554.2 44.0,557.9 47.8,556.7 50.3,557.9 54.1,565.5 59.2,576.8 64.2,580.6 68.0,573.1 73.0,576.8 76.8,570.5 80.6,579.4 85.6,576.8 91.9,583.1 100.7,586.2 107.0,566.8 110.8,566.8 114.6,574.3 120.9,579.4 128.5,585.7 133.5,590.7 137.3,585.7 142.3,586.9 151.2,588.2 154.9,588.2 158.7,583.1 163.8,581.9 167.6,576.8 171.3,585.7 176.4,578.1 180.2,577.6 183.9,581.1 191.5,583.1 196.5,586.9 201.6,580.6 206.6,585.7 211.7,588.2 219.2,592.0 226.8,593.7 231.8,575.6 239.4,565.5 245.0,570.5 248.8,564.2 255.1,573.6 258.9,573.1 265.2,565.5 269.0,561.7 272.0,550.9 275.3,562.5 279.1,561.7 286.6,568.0 290.4,563.7 294.2,566.8 298.0,583.1 300.5,584.4 303.0,576.8 308.1,578.1 310.6,571.0 315.6,571.8 320.7,575.6 325.7,579.4 335.8,583.6 340.8,585.7 343.9,576.1 350.9,580.6 356.0,565.5 363.5,539.0 371.1,536.5 374.9,512.6 378.1,516.3 381.2,515.6 384.2,515.6 387.5,539.0 391.2,542.8 396.3,547.3 398.8,547.3 405.1,530.2 407.6,536.5 411.4,523.9 413.9,526.4 420.2,541.6 422.8,541.6 429.1,570.0 431.6,565.5 435.4,570.5 440.4,571.8 444.2,568.5 454.3,571.8 459.3,580.6 461.8,578.1 464.9,584.4 468.1,566.8 471.9,564.2 472.8,568.8 477.1,579.3 481.3,581.0 485.6,570.2 489.3,577.3 496.9,574.5 500.6,564.0 504.0,570.8 509.7,568.8 515.4,573.1 519.6,534.8 525.3,513.5 529.6,509.3 531.0,509.3 535.2,527.7 537.5,543.3 540.9,543.3 543.2,534.8 546.0,544.1 550.8,544.7 557.9,564.6 560.8,559.5 563.6,558.9 567.0,541.9 570.7,563.1 576.4,564.6 582.0,570.8 586.3,567.4 593.4,563.1 596.8,556.6 603.3,560.3 609.0,565.1 614.6,573.6 620.3,569.7 626.8,549.8 630.2,550.9 633.1,560.3 639.6,546.1 644.4,557.5 651.5,552.6 657.2,559.5 660.6,556.0 664.3,568.8 668.5,570.8 674.2,578.7 681.3,587.2 688.4,586.7 694.0,589.5 699.7,584.4 705.4,587.2 712.5,594.3 718.2,592.9 725.2,594.3 729.5,592.9 729.5,531 10,531" fill="url(#obg)"/>
    <path d="M28.9 547.9C29.9 547.7 32.1 547.0 35.2 546.6C38.4 546.2 44.8 544.9 47.8 545.3C50.8 545.7 49.9 546.4 52.9 549.1C55.9 551.8 60.9 557.9 65.5 561.7C70.1 565.5 76.0 569.1 80.6 571.8C85.2 574.5 89.4 576.8 93.2 578.1C97.0 579.5 99.5 579.9 103.3 579.9C107.1 579.9 112.1 578.3 115.9 578.1C119.7 577.9 122.7 578.5 126.0 578.9C129.3 579.3 132.7 580.1 136.0 580.6C139.3 581.1 142.7 581.0 146.1 581.9C149.5 582.8 152.0 585.6 156.2 586.2C160.4 586.8 165.4 586.3 171.3 585.7C177.2 585.1 185.6 582.9 191.5 582.4C197.4 581.9 202.0 582.0 206.6 582.6C211.2 583.2 215.4 584.9 219.2 585.7C223.0 586.6 225.9 588.1 229.3 587.7C232.7 587.3 235.5 584.9 239.4 583.1C243.3 581.3 248.7 578.5 252.6 576.8C256.5 575.0 259.3 574.4 262.7 572.6C266.1 570.8 269.9 567.2 272.8 566.0C275.7 564.8 277.0 565.5 280.3 565.5C283.6 565.5 288.7 565.5 292.9 566.0C297.1 566.5 301.3 567.5 305.5 568.5C309.7 569.5 314.3 570.8 318.1 571.8C321.9 572.8 325.2 573.2 328.2 574.3C331.1 575.3 332.0 577.3 335.8 578.1C339.6 578.9 347.1 579.3 350.9 578.9C354.7 578.5 355.1 578.0 358.5 575.6C361.9 573.2 366.9 569.2 371.1 564.2C375.3 559.2 379.9 549.9 383.7 545.3C387.5 540.7 390.4 538.5 393.8 536.5C397.2 534.5 400.5 534.0 403.9 533.2C407.2 532.4 410.1 530.3 413.9 531.5C417.7 532.7 421.9 537.4 426.5 540.3C431.1 543.2 437.5 546.4 441.7 549.1C445.9 551.8 448.3 553.6 451.7 556.7C455.1 559.9 459.3 565.4 461.8 568.0C464.3 570.6 465.2 571.8 466.9 572.6C468.6 573.4 469.5 572.3 471.9 572.6C474.3 572.9 477.1 574.0 481.3 574.5C485.5 575.0 492.6 576.1 496.9 575.9C501.2 575.7 503.8 573.5 506.9 573.1C510.0 572.7 512.6 575.7 515.4 573.6C518.2 571.5 520.6 564.6 523.9 560.3C527.2 555.9 531.4 551.0 535.2 547.5C539.0 544.0 543.1 541.6 546.6 539.6C550.1 537.6 553.2 535.0 556.5 535.3C559.8 535.6 563.1 538.4 566.4 541.3C569.7 544.2 572.6 549.4 576.4 552.6C580.2 555.8 585.6 558.6 589.1 560.3C592.6 562.0 594.3 562.1 597.6 562.6C600.9 563.1 605.2 562.5 609.0 563.1C612.8 563.7 616.5 566.0 620.3 566.0C624.1 566.0 627.0 564.2 631.7 563.1C636.4 562.0 643.8 560.8 648.7 559.5C653.7 558.2 657.1 555.4 661.4 555.5C665.6 555.6 670.2 558.1 674.2 560.3C678.2 562.5 681.7 565.8 685.5 568.8C689.3 571.8 693.1 575.6 696.9 578.2C700.7 580.8 704.4 582.6 708.2 584.4C712.0 586.1 716.2 587.7 719.6 588.7C723.0 589.7 727.1 590.3 728.6 590.6" fill="none" stroke="#fdd835" stroke-width="1.25" stroke-linejoin="round"/>
    <polyline points="10.0,545.3 12.5,534.0 16.3,529.5 20.1,528.2 23.9,540.3 26.4,547.9 30.2,549.9 35.2,551.6 41.5,554.2 44.0,557.9 47.8,556.7 50.3,557.9 54.1,565.5 59.2,576.8 64.2,580.6 68.0,573.1 73.0,576.8 76.8,570.5 80.6,579.4 85.6,576.8 91.9,583.1 100.7,586.2 107.0,566.8 110.8,566.8 114.6,574.3 120.9,579.4 128.5,585.7 133.5,590.7 137.3,585.7 142.3,586.9 151.2,588.2 154.9,588.2 158.7,583.1 163.8,581.9 167.6,576.8 171.3,585.7 176.4,578.1 180.2,577.6 183.9,581.1 191.5,583.1 196.5,586.9 201.6,580.6 206.6,585.7 211.7,588.2 219.2,592.0 226.8,593.7 231.8,575.6 239.4,565.5 245.0,570.5 248.8,564.2 255.1,573.6 258.9,573.1 265.2,565.5 269.0,561.7 272.0,550.9 275.3,562.5 279.1,561.7 286.6,568.0 290.4,563.7 294.2,566.8 298.0,583.1 300.5,584.4 303.0,576.8 308.1,578.1 310.6,571.0 315.6,571.8 320.7,575.6 325.7,579.4 335.8,583.6 340.8,585.7 343.9,576.1 350.9,580.6 356.0,565.5 363.5,539.0 371.1,536.5 374.9,512.6 378.1,516.3 381.2,515.6 384.2,515.6 387.5,539.0 391.2,542.8 396.3,547.3 398.8,547.3 405.1,530.2 407.6,536.5 411.4,523.9 413.9,526.4 420.2,541.6 422.8,541.6 429.1,570.0 431.6,565.5 435.4,570.5 440.4,571.8 444.2,568.5 454.3,571.8 459.3,580.6 461.8,578.1 464.9,584.4 468.1,566.8 471.9,564.2 472.8,568.8 477.1,579.3 481.3,581.0 485.6,570.2 489.3,577.3 496.9,574.5 500.6,564.0 504.0,570.8 509.7,568.8 515.4,573.1 519.6,534.8 525.3,513.5 529.6,509.3 531.0,509.3 535.2,527.7 537.5,543.3 540.9,543.3 543.2,534.8 546.0,544.1 550.8,544.7 557.9,564.6 560.8,559.5 563.6,558.9 567.0,541.9 570.7,563.1 576.4,564.6 582.0,570.8 586.3,567.4 593.4,563.1 596.8,556.6 603.3,560.3 609.0,565.1 614.6,573.6 620.3,569.7 626.8,549.8 630.2,550.9 633.1,560.3 639.6,546.1 644.4,557.5 651.5,552.6 657.2,559.5 660.6,556.0 664.3,568.8 668.5,570.8 674.2,578.7 681.3,587.2 688.4,586.7 694.0,589.5 699.7,584.4 705.4,587.2 712.5,594.3 718.2,592.9 725.2,594.3 729.5,592.9" fill="none" stroke="#7e57c2" stroke-width="1.1" stroke-linejoin="round"/>
  </g>
</svg>


<!-- price axis labels -->
<div class="t ax" style="left:889px;top:35px">4.0000</div>
<div class="t ax" style="left:889px;top:73px">3.0000</div>
<div class="t ax" style="left:889px;top:114px">2.2000</div>
<div class="t ax" style="left:889px;top:155px">1.6000</div>
<div class="t ax" style="left:889px;top:193px">1.2000</div>
<div class="t ax" style="left:889px;top:232px">0.9000</div>
<div class="t ax" style="left:889px;top:265px">0.7000</div>
<div class="t ax" style="left:889px;top:338px">0.4000</div>
<div class="t ax" style="left:889px;top:376px">0.3000</div>
<div class="t ax" style="left:889px;top:481px">0.1350</div>

<div class="pl" style="top:289px;background:#f23645"><span>0.5688</span></div>
<div class="pl" style="top:345px;background:#2962ff"><span>0.3722</span></div>
<div class="pl" style="top:391px;height:30.5px;background:#089981"><span>0.2627</span><span style="top:17px;color:#b9e3d9;-webkit-text-stroke:0.2px #b9e3d9">3d 14h</span></div>
<div class="pl" style="top:422px;background:#ffffff"><span style="color:#131313;-webkit-text-stroke:0.1px #131313">0.2406</span></div>
<div class="pl" style="top:444px;background:#089981"><span>0.1756</span></div>
<div style="position:absolute;left:829px;top:391px;width:51px;height:17px;background:#089981;border-radius:2px 0 0 2px"><span class="t" style="left:4px;top:3px;font-weight:700;color:#fff;transform:scaleX(0.83);transform-origin:0 0">ADAUSD</span></div>

<!-- rsi axis -->
<div class="t ax" style="left:889px;top:510px">80.00</div>
<div class="t ax" style="left:889px;top:541px">60.00</div>
<div class="pl" style="top:567px;width:43px;background:#fdd835"><span style="color:#131313;-webkit-text-stroke:0.1px #131313">31.40</span></div>
<div class="pl" style="top:584px;width:43px;background:#7e57c2"><span>30.29</span></div>

<!-- time axis -->
<div class="t yr" style="left:60px;top:616px">2022</div>
<div class="t mo" style="left:144px;top:616px">Jul</div>
<div class="t yr" style="left:217px;top:616px">2023</div>
<div class="t mo" style="left:300px;top:616px">Jul</div>
<div class="t yr" style="left:373.5px;top:616px">2024</div>
<div class="t mo" style="left:457px;top:616px">Jul</div>
<div class="t yr" style="left:532px;top:616px">2025</div>
<div class="t mo" style="left:616px;top:616px">Jul</div>
<div class="t yr" style="left:688.5px;top:616px">2026</div>
<div class="t mo" style="left:772.5px;top:616px">Jul</div>
<div class="t yr" style="left:844.5px;top:616px">2027</div>

<!-- legend -->
<div class="t lg" style="left:18px;top:36px">Cardano / US Dollar · 1W · Coinbase</div>
<div class="t lg" style="left:220px;top:36px">O</div><div class="t lg tl" style="left:227.5px;top:36px">0.2492</div>
<div class="t lg" style="left:270.5px;top:36px">H</div><div class="t lg tl" style="left:278.5px;top:36px">0.2741</div>
<div class="t lg" style="left:321px;top:36px">L</div><div class="t lg tl" style="left:327.5px;top:36px">0.2489</div>
<div class="t lg" style="left:370px;top:36px">C</div><div class="t lg tl" style="left:378px;top:36px">0.2627</div>
<div class="t lg tl" style="left:421px;top:36px">+0.0134</div>
<div class="t lg tl" style="left:467px;top:36px;letter-spacing:-0.4px">(+5.38%)</div>
<div class="t lg" style="left:18px;top:52px;letter-spacing:-0.1px">BB (20, SMA, close, 2)</div>
<div class="t lg" style="left:142.5px;top:52px;color:#2962ff">0.3722</div>
<div class="t lg" style="left:185.5px;top:52px;color:#f23645">0.5688</div>
<div class="t lg tl" style="left:229.5px;top:52px">0.1756</div>
<div class="t lg" style="left:18px;top:510px;letter-spacing:-0.2px">RSI (14, close)</div>
<div class="t lg" style="left:101.5px;top:510px;color:#7e57c2">30.29</div>
<div class="t lg" style="left:138px;top:510px;color:#fdd835">31.40</div>

<!-- logo -->
<svg style="position:absolute;left:0;top:640px" width="200" height="56" viewBox="0 640 200 56">
  <g fill="#dcdcdc">
    <path d="M12 658H24V673H18V664H12Z"/>
    <circle cx="29" cy="660.8" r="2.9"/>
    <path d="M35.3 658H41.8L35.9 673H29Z"/>
  </g>
</svg>
<div class="t" style="left:49px;top:655px;font-size:20.5px;line-height:20px;font-weight:700;color:#dcdcdc">TradingView</div>
</body></html>
